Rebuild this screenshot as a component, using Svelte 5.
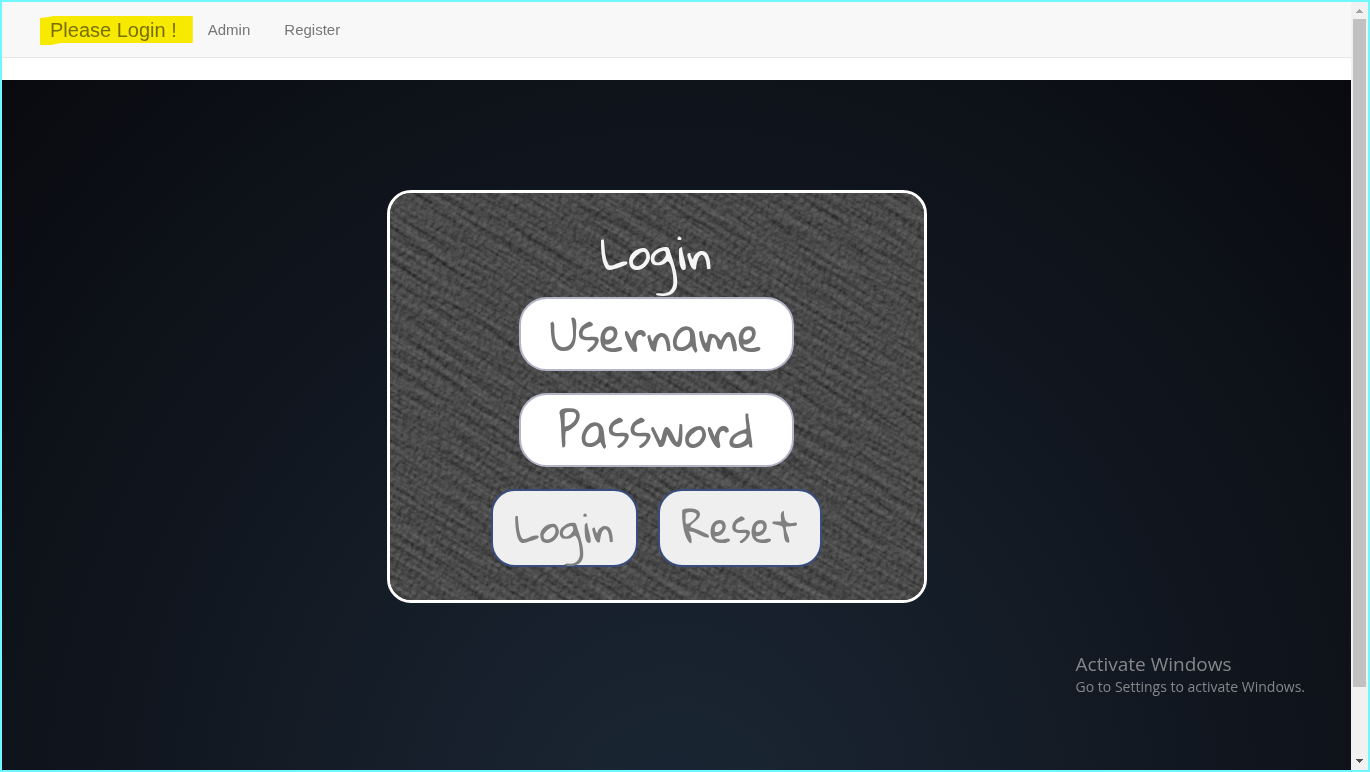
<script>
  let username = $state('');
  let password = $state('');

  function submit(event) {
    event.preventDefault();
  }
</script>

<div class="window">
  <div class="page">
    <nav>
      <a class="brand" href="#home">
        <span>Please Login !</span>
        <svg class="marker" viewBox="0 0 153 31" preserveAspectRatio="none" aria-hidden="true">
          <path d="M0 3 L8 2 L14 1 H153 V29 H21 L11 31 H0 Z" fill="#fff000" />
        </svg>
      </a>
      <a href="#admin">Admin</a>
      <a href="#register">Register</a>
    </nav>

    <main>
      <form class="card" onsubmit={submit}>
        <svg class="slate" aria-hidden="true">
          <filter id="streaks" x="0" y="0" width="100%" height="100%" color-interpolation-filters="sRGB">
            <feTurbulence type="fractalNoise" baseFrequency="0.018 0.12" numOctaves="3" seed="21" />
            <feDiffuseLighting surfaceScale="1.5" diffuseConstant="1" lighting-color="#707070">
              <feDistantLight azimuth="270" elevation="42" />
            </feDiffuseLighting>
          </filter>
          <filter id="grain" x="0" y="0" width="100%" height="100%" color-interpolation-filters="sRGB">
            <feTurbulence type="fractalNoise" baseFrequency="0.2" numOctaves="4" seed="3" />
            <feDiffuseLighting surfaceScale="1.5" diffuseConstant="1" lighting-color="#707070">
              <feDistantLight azimuth="225" elevation="42" />
            </feDiffuseLighting>
          </filter>
          <rect x="-300" y="-500" width="1400" height="1400" filter="url(#streaks)" transform="rotate(31)" />
          <rect width="100%" height="100%" filter="url(#grain)" opacity="0.4" />
        </svg>
        <h1>Login</h1>
        <input type="text" aria-label="Username" placeholder="Username" bind:value={username} />
        <input type="password" aria-label="Password" placeholder="Password" bind:value={password} />
        <div class="actions">
          <button type="submit">Login</button>
          <button type="reset">Reset</button>
        </div>
      </form>

      <aside>
        <p class="notice">Activate Windows</p>
        <p>Go to Settings to activate Windows.</p>
      </aside>
    </main>
  </div>

  <div class="scrollbar" aria-hidden="true">
    <svg viewBox="0 0 17 17"><path d="M8 7h1v1h1v1h1v1h1v1H5v-1h1V9h1V8h1z" fill="#a3a3a3" /></svg>
    <div class="track"><div class="thumb"></div></div>
    <svg viewBox="0 0 17 17"><path d="M5 6h7v1h-1v1h-1v1H9v1H8V9H7V8H6V7H5z" fill="#505050" /></svg>
  </div>
</div>

<style>
  :global(body) {
    margin: 0;
  }

  .window {
    box-sizing: border-box;
    display: flex;
    height: 100vh;
    border: 2px solid #6ff8ff;
    font-family: Arial, "Liberation Sans", sans-serif;
  }

  .page {
    display: flex;
    flex: 1;
    flex-direction: column;
    min-width: 0;
    background: #fff;
  }

  nav {
    display: flex;
    align-items: center;
    gap: 34px;
    height: 55px;
    margin-bottom: 22px;
    padding-left: 38px;
    border-bottom: 1px solid #e7e7e7;
    background: #f8f8f8;
  }

  nav a {
    color: #777;
    font-size: 15px;
    line-height: 20px;
    text-decoration: none;
  }

  nav .brand {
    position: relative;
    margin-right: -19px;
    padding: 5px 16px 5px 10px;
    font-size: 20px;
  }

  .marker {
    position: absolute;
    inset: 0;
    width: 100%;
    height: 100%;
    mix-blend-mode: multiply;
  }

  main {
    display: flex;
    flex: 1;
    flex-direction: column;
    align-items: center;
    justify-content: space-between;
    padding: 110px 40px 73px 0;
    background: radial-gradient(ellipse at 50% 111%, #1b2735 0%, #090a0f 100%);
  }

  .card {
    position: relative;
    isolation: isolate;
    box-sizing: border-box;
    display: flex;
    flex-direction: column;
    align-items: center;
    gap: 22px;
    width: 540px;
    max-width: 100%;
    padding: 32px 20px 33px;
    overflow: hidden;
    border: 3px solid #fff;
    border-radius: 24px;
    background: #474747;
    font-family: "Gloria Hallelujah", Lato, sans-serif;
  }

  .slate {
    position: absolute;
    z-index: -1;
    inset: 0;
    width: 100%;
    height: 100%;
  }

  h1 {
    margin: 0 0 -4px;
    color: #f5f5f5;
    font-size: 45px;
    font-weight: 400;
    line-height: 54px;
  }

  input {
    box-sizing: border-box;
    width: 275px;
    max-width: 100%;
    height: 74px;
    padding: 0 20px 2px;
    border: 2px solid #b4b4c8;
    border-radius: 28px;
    background: #fff;
    color: #757575;
    font-family: inherit;
    font-size: 45px;
    text-align: center;
  }

  input::placeholder {
    color: #757575;
    opacity: 1;
  }

  .actions {
    display: flex;
    gap: 20px;
  }

  button {
    height: 78px;
    padding: 0 22px 6px;
    border: 2px solid #3a4d80;
    border-radius: 24px;
    background: #efefef;
    color: #808080;
    font-family: inherit;
    font-size: 40px;
    line-height: 72px;
  }

  aside {
    align-self: flex-end;
    padding-right: 6px;
    color: #84868a;
    font-family: "Segoe UI", "Open Sans", sans-serif;
    font-size: 14px;
    line-height: 20px;
  }

  aside p {
    margin: 0;
  }

  aside .notice {
    font-size: 19px;
    line-height: 26px;
  }

  .scrollbar {
    display: flex;
    flex-direction: column;
    width: 17px;
    background: #f1f1f1;
  }

  .scrollbar svg {
    width: 17px;
    height: 17px;
    shape-rendering: crispEdges;
  }

  .track {
    flex: 1;
    padding: 0 2px;
  }

  .thumb {
    height: 91%;
    background: #c1c1c1;
  }
</style>
